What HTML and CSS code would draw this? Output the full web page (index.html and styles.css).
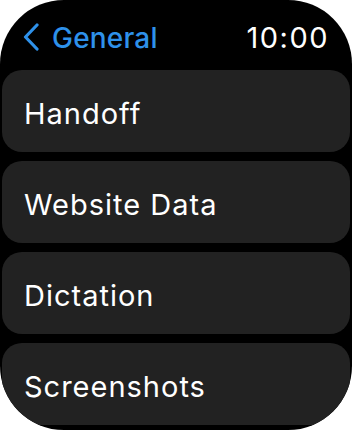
FILE: index.html
```html
<!DOCTYPE html>
<html>
<head>
<meta charset="utf-8">
<link rel="stylesheet" href="styles.css">
</head>
<body>
<div class="screen">
  <div class="header">
    <div class="back">
      <svg class="chevron" width="18" height="28" viewBox="0 0 18 28"><path d="M15 2 L3.5 14 L15 26" fill="none" stroke="#2e91ea" stroke-width="3.2" stroke-linecap="round" stroke-linejoin="round"/></svg>
      <span class="back-label">General</span>
    </div>
    <span class="time">10:00</span>
  </div>
  <div class="list">
    <div class="card">Handoff</div>
    <div class="card">Website Data</div>
    <div class="card">Dictation</div>
    <div class="card">Screenshots</div>
  </div>
</div>
</body>
</html>
```
FILE: styles.css
```css
html, body {
  margin: 0;
  padding: 0;
  background: #fff;
}
.screen {
  width: 352px;
  height: 430px;
  background: #000;
  border-radius: 64px;
  overflow: hidden;
  font-family: Inter, "Noto Sans", sans-serif;
}
.header {
  height: 70px;
  display: flex;
  align-items: center;
  justify-content: space-between;
  padding: 5px 23px 0 22px;
  box-sizing: border-box;
}
.back {
  display: flex;
  align-items: center;
  gap: 12px;
  color: #2e91ea;
}
.chevron {
  display: block;
  margin-top: -1px;
}
.back-label {
  font-size: 28px;
  font-weight: 500;
  letter-spacing: 0.2px;
}
.time {
  color: #fff;
  font-size: 29px;
  font-weight: 400;
  letter-spacing: 1.5px;
}
.list {
  display: flex;
  flex-direction: column;
  gap: 9px;
  padding: 0 2px;
}
.card {
  height: 82px;
  flex-shrink: 0;
  box-sizing: border-box;
  padding-top: 4px;
  background: #222222;
  border-radius: 20px;
  display: flex;
  align-items: center;
  padding-left: 22px;
  color: #fff;
  font-size: 29px;
  letter-spacing: 1px;
}
```
